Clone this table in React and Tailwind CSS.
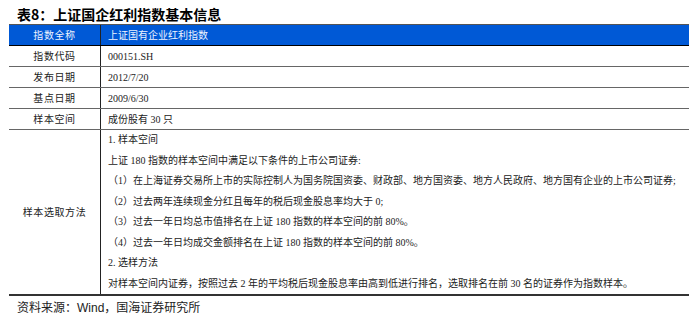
const SERIF = "font-['Liberation_Serif','Noto_Sans_CJK_SC',serif]";

const simpleRows = [
  ["指数代码", "000151.SH"],
  ["发布日期", "2012/7/20"],
  ["基点日期", "2009/6/30"],
  ["样本空间", "成份股有 30 只"],
];

const methodLines = [
  "1. 样本空间",
  "上证 180 指数的样本空间中满足以下条件的上市公司证券:",
  "（1）在上海证券交易所上市的实际控制人为国务院国资委、财政部、地方国资委、地方人民政府、地方国有企业的上市公司证券;",
  "（2）过去两年连续现金分红且每年的税后现金股息率均大于 0;",
  "（3）过去一年日均总市值排名在上证 180 指数的样本空间的前 80%。",
  "（4）过去一年日均成交金额排名在上证 180 指数的样本空间的前 80%。",
  "2. 选样方法",
  "对样本空间内证券，按照过去 2 年的平均税后现金股息率由高到低进行排名，选取排名在前 30 名的证券作为指数样本。",
];

export default function App() {
  return (
    <div className="w-[700px] h-[320px] bg-white overflow-hidden">
      {/* title */}
      <div className="h-[24px] pl-[17px] pt-[5px] text-[14px] leading-[18px] font-bold text-black font-['Noto_Sans_CJK_SC',sans-serif]">
        表8：上证国企红利指数基本信息
      </div>

      {/* table */}
      <div className={`ml-[9px] w-[680px] text-[10px] text-[#222] ${SERIF}`}>
        <div className="flex h-[22px] items-center bg-[#0059d6] border-t border-t-[#555] border-b border-b-black text-[#eef3ff]">
          <div className="w-[92px] h-full flex items-center justify-center border-r border-r-[#222] tracking-[0.6px]">
            指数全称
          </div>
          <div className="pl-[7px]">上证国有企业红利指数</div>
        </div>

        {simpleRows.map(([k, v]) => (
          <div key={k} className="flex h-[21px] items-center border-b border-b-[#666]">
            <div className="w-[92px] h-full flex items-center justify-center border-r border-r-[#222] tracking-[0.6px]">
              {k}
            </div>
            <div className="pl-[7px]">{v}</div>
          </div>
        ))}

        <div className="flex border-b-2 border-b-[#333]">
          <div className="w-[92px] flex items-center justify-center border-r border-r-[#222] tracking-[0.6px]">
            样本选取方法
          </div>
          <div className="pl-[7px] flex flex-col leading-[20.5px]">
            {methodLines.map((t, i) => (
              <div key={i}>{t}</div>
            ))}
          </div>
        </div>
      </div>

      {/* source */}
      <div className="pl-[17px] pt-[4px] text-[12px] leading-[16px] text-[#222] font-['Liberation_Sans','Noto_Sans_CJK_SC',sans-serif]">
        资料来源：Wind，国海证券研究所
      </div>
    </div>
  );
}
